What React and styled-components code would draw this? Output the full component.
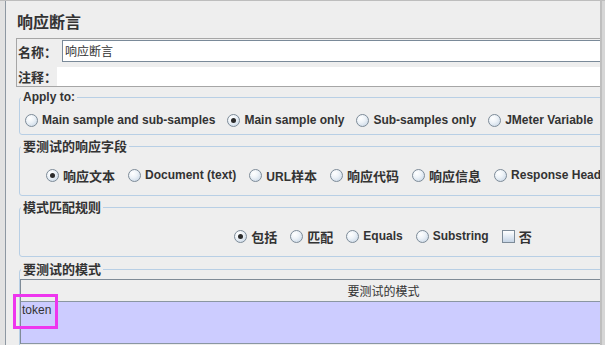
import React from 'react'
import styled, { createGlobalStyle, css } from 'styled-components'

const GlobalStyle = createGlobalStyle`
  html, body {
    margin: 0;
    padding: 0;
    background: #eeeeee;
  }
  body {
    width: 605px;
    height: 345px;
    overflow: hidden;
    font-family: "Liberation Sans", "Noto Sans CJK SC", sans-serif;
    color: #333333;
  }
`

const Frame = styled.div`
  display: flex;
  width: 605px;
  height: 345px;
  box-sizing: border-box;
  border-top: 1px solid #bdbdbd;
  background: #eeeeee;
`

const LeftEdge = styled.div`
  width: 5px;
  flex-shrink: 0;
  background: #e2e2e2;
  border-right: 1px solid #8e98a2;
`

const RightEdge = styled.div`
  width: 5px;
  flex-shrink: 0;
  background: linear-gradient(90deg, #bebebe 0, #bebebe 2px, #d6d6d6 2px);
`

const Panel = styled.div`
  flex: 1;
  overflow: hidden;
  padding-left: 10px;
`

const Content = styled.div`
  width: 732px;
  position: relative;
`

const Title = styled.div`
  padding: 10px 0 0 1px;
  height: 20px;
  line-height: 20px;
  margin-bottom: 7px;
  font-family: "Noto Sans CJK SC", sans-serif;
  font-size: 16px;
  font-weight: bold;
  color: #333;
`

const NameBox = styled.div`
  border: 1px solid #a6a6a6;
  border-right: none;
`

const FieldRow = styled.div`
  display: flex;
  align-items: center;
  padding-left: 1px;
  margin-top: ${p => p.$top}px;
`

const Label = styled.span`
  font-family: "Noto Sans CJK SC", sans-serif;
  font-size: 13px;
  font-weight: bold;
  margin-right: ${p => p.$gap || 0}px;
  white-space: nowrap;
`

const TextField = styled.div`
  flex: 1;
  height: ${p => p.$h}px;
  box-sizing: border-box;
  background: #ffffff;
  border: ${p => (p.$framed ? '1px solid #7a8a99' : 'none')};
  border-right: none;
  padding-left: 2px;
  font-family: "Noto Sans CJK SC", sans-serif;
  font-size: 12px;
  line-height: 20px;
  color: #333;
`

const Group = styled.fieldset`
  margin: ${p => p.$top}px 0 0 3px;
  padding: ${p => p.$pt}px 1px ${p => p.$pb}px 0;
  border: 1px solid #b8cfe5;
  border-radius: 3px;
  min-width: 0;
`

const Legend = styled.legend`
  margin-left: 1px;
  padding: 0 2px;
  line-height: 16px;
  font-weight: bold;
  font-size: ${p => (p.$cjk ? 13 : 12)}px;
  font-family: ${p => (p.$cjk ? '"Noto Sans CJK SC", sans-serif' : '"Liberation Sans", sans-serif')};
  color: #333;
`

const OptionRow = styled.div`
  display: flex;
  align-items: center;
  justify-content: ${p => (p.$center ? 'center' : 'flex-start')};
  height: 16px;
  gap: ${p => p.$gap || 13}px;
  padding-left: ${p => p.$indent || 0}px;
  white-space: nowrap;
`

const Option = styled.span`
  display: inline-flex;
  align-items: center;
  gap: 4px;
  font-size: 12px;
  font-weight: bold;
  color: #333;
`

const Cjk = styled.span`
  font-family: "Noto Sans CJK SC", sans-serif;
  font-size: 13px;
`

const Radio = styled.span`
  position: relative;
  width: 13px;
  height: 13px;
  box-sizing: border-box;
  flex-shrink: 0;
  border-radius: 50%;
  border: 1px solid #7d8b98;
  background: radial-gradient(circle at 35% 30%, #ffffff 0%, #eef3f8 40%, #c2d2e3 100%);
  ${p =>
    p.$checked &&
    css`
      &::after {
        content: '';
        position: absolute;
        left: 3px;
        top: 3px;
        width: 5px;
        height: 5px;
        border-radius: 50%;
        background: #2b2b2b;
      }
    `}
`

const Check = styled.span`
  width: 13px;
  height: 13px;
  box-sizing: border-box;
  flex-shrink: 0;
  border: 1px solid #7d8b98;
  background: linear-gradient(180deg, #ffffff 0%, #e6edf5 45%, #c5d4e5 100%);
`

const Table = styled.div`
  border-top: 1px solid #7f8b97;
  border-left: 1px solid #7f8b97;
`

const HeaderCell = styled.div`
  height: 21px;
  line-height: 21px;
  text-align: center;
  border-bottom: 1px solid #8a96a2;
  font-family: "Noto Sans CJK SC", sans-serif;
  font-size: 12px;
  color: #333;
`

const DataRow = styled.div`
  position: relative;
  height: 40px;
  background: #ccccff;
  border-bottom: 1px solid #8a96a2;
  padding: 1px 0 0 1px;
  box-sizing: content-box;
  font-size: 12px;
  line-height: 14px;
  color: #333;
`

const Highlight = styled.span`
  position: absolute;
  left: -8px;
  top: -8px;
  width: 45px;
  height: 35px;
  box-sizing: border-box;
  border: 3px solid #ee36ee;
`

const Opt = ({ checked, children }) => (
  <Option>
    <Radio $checked={checked} />
    <span>{children}</span>
  </Option>
)

export default function App() {
  return (
    <>
      <GlobalStyle />
      <Frame>
        <LeftEdge />
        <Panel>
          <Content>
            <Title>响应断言</Title>
            <NameBox>
              <FieldRow $top={1}>
                <Label $gap={5}>名称：</Label>
                <TextField $h={22} $framed>响应断言</TextField>
              </FieldRow>
              <FieldRow $top={5}>
                <Label>注释：</Label>
                <TextField $h={19} />
              </FieldRow>
            </NameBox>

            <Group $top={2} $pt={7} $pb={6}>
              <Legend>Apply to:</Legend>
              <OptionRow $indent={5} $gap={12}>
                <Opt>Main sample and sub-samples</Opt>
                <Opt checked>Main sample only</Opt>
                <Opt>Sub-samples only</Opt>
                <Opt>JMeter Variable</Opt>
              </OptionRow>
            </Group>

            <Group $top={3} $pt={13} $pb={12}>
              <Legend $cjk>要测试的响应字段</Legend>
              <OptionRow $indent={26} $gap={13}>
                <Opt checked><Cjk>响应文本</Cjk></Opt>
                <Opt>Document (text)</Opt>
                <Opt>URL<Cjk>样本</Cjk></Opt>
                <Opt><Cjk>响应代码</Cjk></Opt>
                <Opt><Cjk>响应信息</Cjk></Opt>
                <Opt>Response Heade</Opt>
              </OptionRow>
            </Group>

            <Group $top={3} $pt={13} $pb={12}>
              <Legend $cjk>模式匹配规则</Legend>
              <OptionRow $center>
                <Opt checked><Cjk>包括</Cjk></Opt>
                <Opt><Cjk>匹配</Cjk></Opt>
                <Opt>Equals</Opt>
                <Opt>Substring</Opt>
                <Option>
                  <Check />
                  <Cjk>否</Cjk>
                </Option>
              </OptionRow>
            </Group>

            <Group $top={4} $pt={2} $pb={40}>
              <Legend $cjk>要测试的模式</Legend>
              <Table>
                <HeaderCell>要测试的模式</HeaderCell>
                <DataRow>
                  token
                  <Highlight />
                </DataRow>
              </Table>
            </Group>
          </Content>
        </Panel>
        <RightEdge />
      </Frame>
    </>
  )
}
